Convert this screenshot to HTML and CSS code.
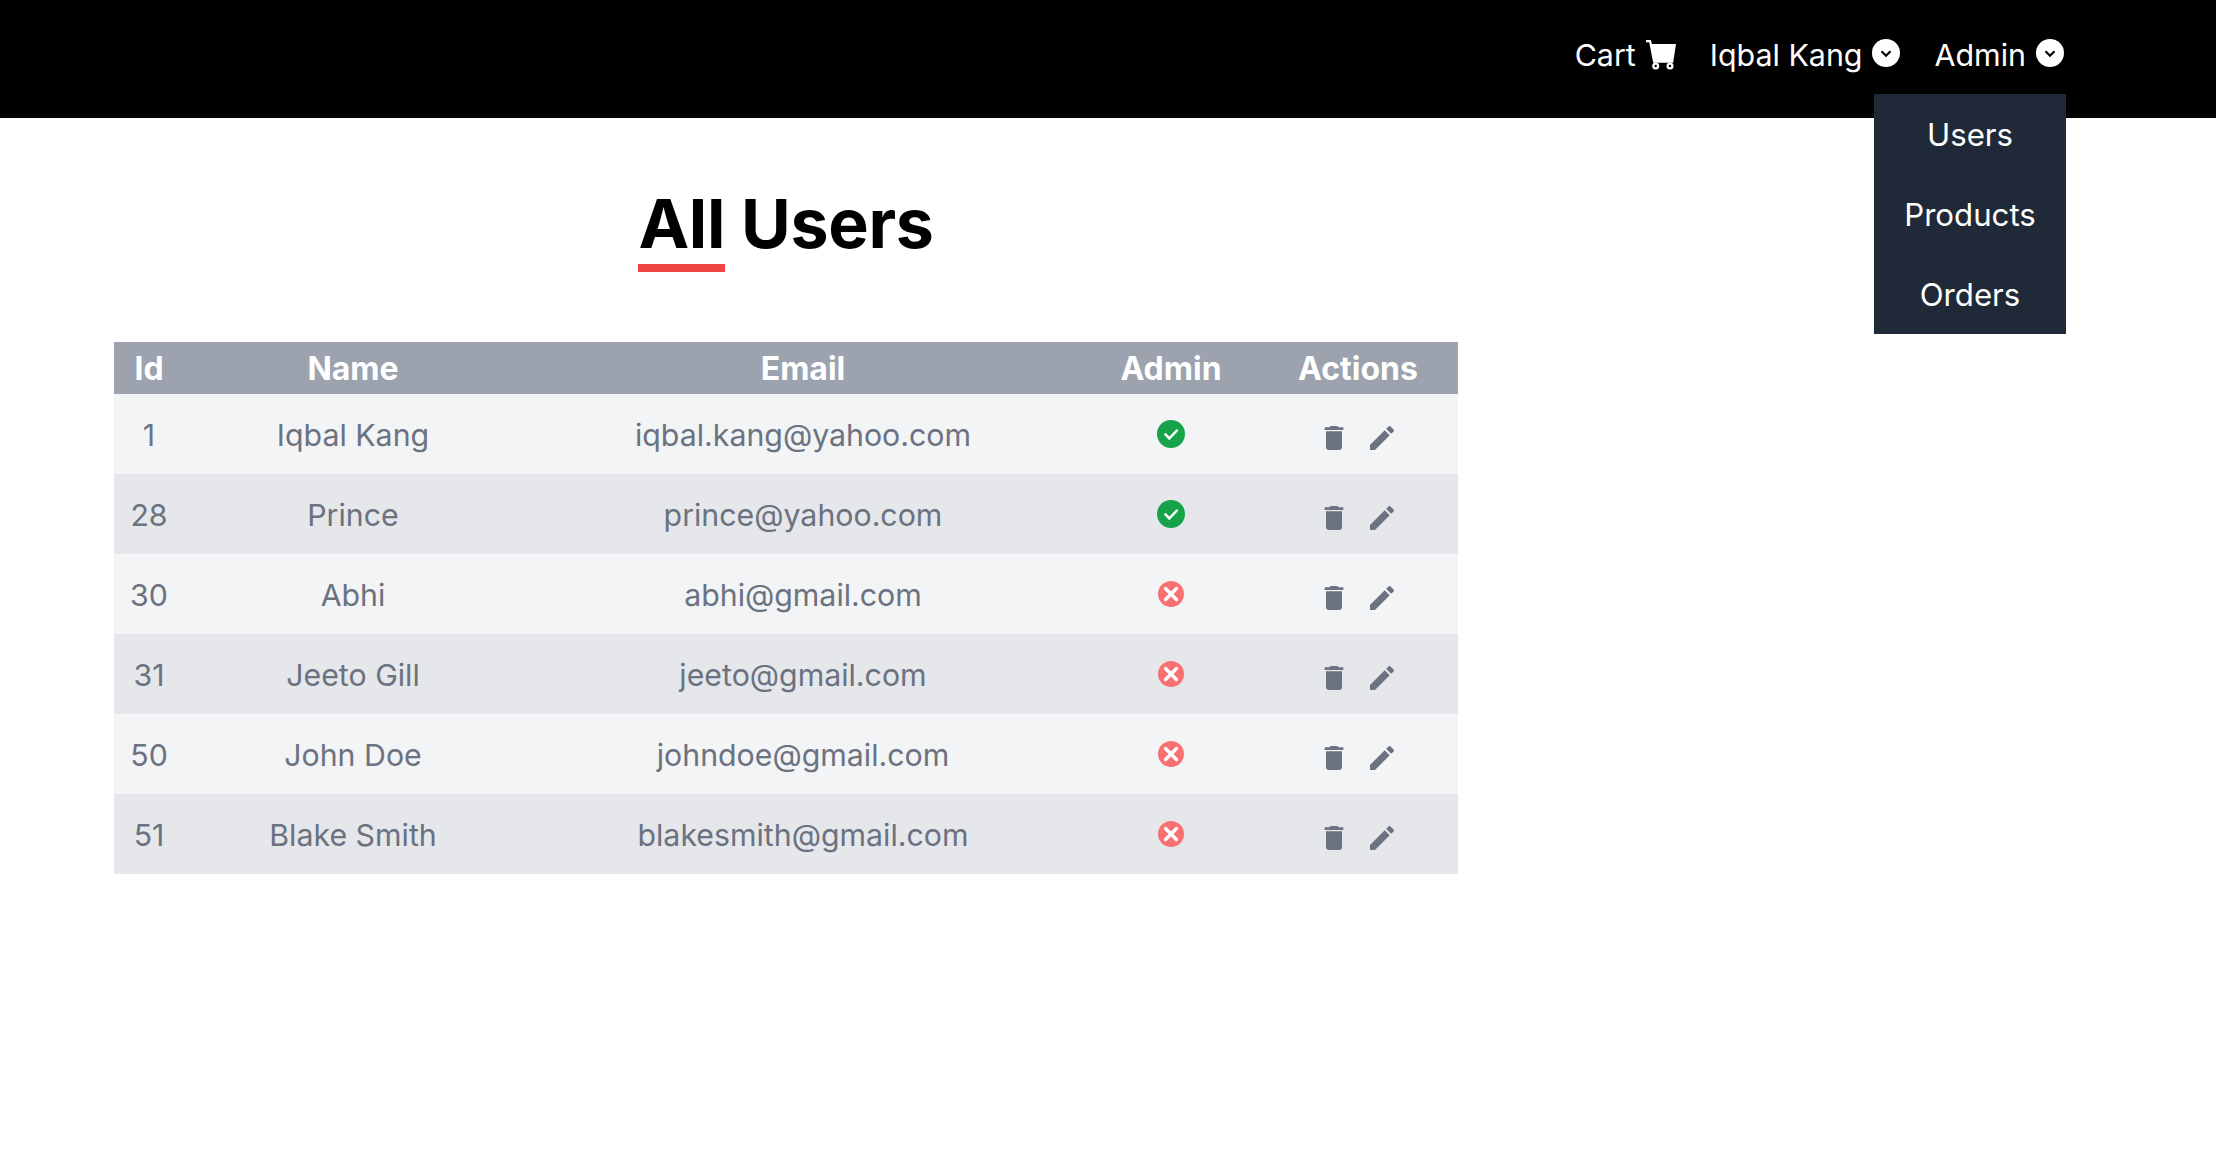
FILE: index.html
```html
<!DOCTYPE html>
<html lang="en">
<head>
<meta charset="utf-8">
<title>All Users</title>
<link rel="stylesheet" href="styles.css">
</head>
<body>
<header class="navbar">
  <a class="nav-link">Cart
    <svg class="cart-icon" viewBox="0 0 30 30"><path d="M0 0h3.6c.9 0 1.5.5 1.7 1.3L5.8 4H30l-2.6 16.8-.2 2H7.2L3.2 2.2H0z"/><path fill-rule="evenodd" d="M9.7 22.5a3.5 3.5 0 1 0 0 7 3.5 3.5 0 0 0 0-7zm0 2.3a1.2 1.2 0 1 1 0 2.4 1.2 1.2 0 0 1 0-2.4zM24 22.5a3.5 3.5 0 1 0 0 7 3.5 3.5 0 0 0 0-7zm0 2.3a1.2 1.2 0 1 1 0 2.4 1.2 1.2 0 0 1 0-2.4z"/></svg>
  </a>
  <a class="nav-link">Iqbal Kang
    <svg class="chev-icon" viewBox="0 0 28 28"><circle cx="14" cy="14" r="14"/><path class="chev" d="M9.5 12.2l4.5 4.5 4.5-4.5"/></svg>
  </a>
  <div class="nav-menu">
    <a class="nav-link">Admin
      <svg class="chev-icon" viewBox="0 0 28 28"><circle cx="14" cy="14" r="14"/><path class="chev" d="M9.5 12.2l4.5 4.5 4.5-4.5"/></svg>
    </a>
    <ul class="dropdown">
      <li>Users</li>
      <li>Products</li>
      <li>Orders</li>
    </ul>
  </div>
</header>
<main class="content">
  <h1 class="title"><span class="title-mark">All</span> Users</h1>
  <table class="users">
    <colgroup><col class="c-id"><col class="c-name"><col class="c-email"><col class="c-admin"><col class="c-actions"></colgroup>
    <thead><tr><th>Id</th><th>Name</th><th>Email</th><th>Admin</th><th>Actions</th></tr></thead>
    <tbody id="rows">
      <tr><td>1</td><td>Iqbal Kang</td><td>iqbal.kang@yahoo.com</td><td><svg class="status yes" viewBox="0 0 20 20"><circle cx="10" cy="10" r="10"/><path d="M6 10.3l2.8 2.8L14.2 7.5" class="mark"/></svg></td><td><div class="actions"><svg class="act" viewBox="0 0 24 24"><path d="M6 19c0 1.1.9 2 2 2h8c1.1 0 2-.9 2-2V7H6v12zM19 4h-3.5l-1-1h-5l-1 1H5v2h14V4z"/></svg><svg class="act" viewBox="0 0 24 24"><path d="M3 17.25V21h3.75L17.81 9.94l-3.75-3.75L3 17.25zM20.71 7.04c.39-.39.39-1.02 0-1.41l-2.34-2.34c-.39-.39-1.02-.39-1.41 0l-1.83 1.83 3.75 3.75 1.83-1.83z"/></svg></div></td></tr>
      <tr><td>28</td><td>Prince</td><td>prince@yahoo.com</td><td><svg class="status yes" viewBox="0 0 20 20"><circle cx="10" cy="10" r="10"/><path d="M6 10.3l2.8 2.8L14.2 7.5" class="mark"/></svg></td><td><div class="actions"><svg class="act" viewBox="0 0 24 24"><path d="M6 19c0 1.1.9 2 2 2h8c1.1 0 2-.9 2-2V7H6v12zM19 4h-3.5l-1-1h-5l-1 1H5v2h14V4z"/></svg><svg class="act" viewBox="0 0 24 24"><path d="M3 17.25V21h3.75L17.81 9.94l-3.75-3.75L3 17.25zM20.71 7.04c.39-.39.39-1.02 0-1.41l-2.34-2.34c-.39-.39-1.02-.39-1.41 0l-1.83 1.83 3.75 3.75 1.83-1.83z"/></svg></div></td></tr>
      <tr><td>30</td><td>Abhi</td><td>abhi@gmail.com</td><td><svg class="status no" viewBox="0 0 20 20"><circle cx="10" cy="10" r="10"/><path d="M5.8 5.8l8.4 8.4M14.2 5.8l-8.4 8.4" class="mark"/></svg></td><td><div class="actions"><svg class="act" viewBox="0 0 24 24"><path d="M6 19c0 1.1.9 2 2 2h8c1.1 0 2-.9 2-2V7H6v12zM19 4h-3.5l-1-1h-5l-1 1H5v2h14V4z"/></svg><svg class="act" viewBox="0 0 24 24"><path d="M3 17.25V21h3.75L17.81 9.94l-3.75-3.75L3 17.25zM20.71 7.04c.39-.39.39-1.02 0-1.41l-2.34-2.34c-.39-.39-1.02-.39-1.41 0l-1.83 1.83 3.75 3.75 1.83-1.83z"/></svg></div></td></tr>
      <tr><td>31</td><td>Jeeto Gill</td><td>jeeto@gmail.com</td><td><svg class="status no" viewBox="0 0 20 20"><circle cx="10" cy="10" r="10"/><path d="M5.8 5.8l8.4 8.4M14.2 5.8l-8.4 8.4" class="mark"/></svg></td><td><div class="actions"><svg class="act" viewBox="0 0 24 24"><path d="M6 19c0 1.1.9 2 2 2h8c1.1 0 2-.9 2-2V7H6v12zM19 4h-3.5l-1-1h-5l-1 1H5v2h14V4z"/></svg><svg class="act" viewBox="0 0 24 24"><path d="M3 17.25V21h3.75L17.81 9.94l-3.75-3.75L3 17.25zM20.71 7.04c.39-.39.39-1.02 0-1.41l-2.34-2.34c-.39-.39-1.02-.39-1.41 0l-1.83 1.83 3.75 3.75 1.83-1.83z"/></svg></div></td></tr>
      <tr><td>50</td><td>John Doe</td><td>johndoe@gmail.com</td><td><svg class="status no" viewBox="0 0 20 20"><circle cx="10" cy="10" r="10"/><path d="M5.8 5.8l8.4 8.4M14.2 5.8l-8.4 8.4" class="mark"/></svg></td><td><div class="actions"><svg class="act" viewBox="0 0 24 24"><path d="M6 19c0 1.1.9 2 2 2h8c1.1 0 2-.9 2-2V7H6v12zM19 4h-3.5l-1-1h-5l-1 1H5v2h14V4z"/></svg><svg class="act" viewBox="0 0 24 24"><path d="M3 17.25V21h3.75L17.81 9.94l-3.75-3.75L3 17.25zM20.71 7.04c.39-.39.39-1.02 0-1.41l-2.34-2.34c-.39-.39-1.02-.39-1.41 0l-1.83 1.83 3.75 3.75 1.83-1.83z"/></svg></div></td></tr>
      <tr><td>51</td><td>Blake Smith</td><td>blakesmith@gmail.com</td><td><svg class="status no" viewBox="0 0 20 20"><circle cx="10" cy="10" r="10"/><path d="M5.8 5.8l8.4 8.4M14.2 5.8l-8.4 8.4" class="mark"/></svg></td><td><div class="actions"><svg class="act" viewBox="0 0 24 24"><path d="M6 19c0 1.1.9 2 2 2h8c1.1 0 2-.9 2-2V7H6v12zM19 4h-3.5l-1-1h-5l-1 1H5v2h14V4z"/></svg><svg class="act" viewBox="0 0 24 24"><path d="M3 17.25V21h3.75L17.81 9.94l-3.75-3.75L3 17.25zM20.71 7.04c.39-.39.39-1.02 0-1.41l-2.34-2.34c-.39-.39-1.02-.39-1.41 0l-1.83 1.83 3.75 3.75 1.83-1.83z"/></svg></div></td></tr>
    </tbody>
  </table>
</main>
</body>
</html>
```
FILE: styles.css
```css
* { box-sizing: border-box; }
html, body { margin: 0; padding: 0; }
body { font-family: Inter, "Liberation Sans", sans-serif; background: #fff; color: #000; height: 1152px; overflow: hidden; }

.navbar { height: 118px; background: #000; color: #fff; display: flex; justify-content: flex-end; align-items: flex-start; gap: 34px; padding: 35px 152px 0 0; font-size: 30.4px; line-height: 40px; }
.nav-link { display: flex; align-items: center; gap: 10px; }
.nav-menu { position: relative; }
.cart-icon { width: 30px; height: 30px; fill: currentColor; }
.chev-icon { width: 28px; height: 28px; margin-top: -4px; fill: currentColor; }
.chev { fill: none; stroke: #000; stroke-width: 2.2; }

.dropdown { position: absolute; top: 59px; right: -2px; width: 192px; margin: 0; padding: 0; list-style: none; background: #1f2937; text-align: center; font-size: 31.2px; z-index: 2; }
.dropdown li { height: 80px; line-height: 82px; }

.content { width: 1344px; margin-left: 114px; }
.title { margin: 59px 0 0; height: 92px; font-size: 68px; line-height: 92px; font-weight: 700; text-align: center; letter-spacing: -0.3px; }
.title-mark { display: inline-block; height: 95px; border-bottom: 8px solid #ef4444; }

.users { width: 1344px; margin-top: 73px; border-collapse: collapse; table-layout: fixed; font-size: 30.3px; }
.c-id { width: 70px; } .c-name { width: 338px; } .c-email { width: 562px; } .c-admin { width: 174px; } .c-actions { width: 200px; }
.users th { height: 52px; padding: 2px 0 0; background: #9ca3af; color: #fff; font-size: 32px; font-weight: 700; line-height: 50px; }
.users td { height: 80px; padding: 2px 0 0; text-align: center; color: #6b7280; }
.users tbody tr:nth-child(odd) { background: #f3f4f6; }
.users tbody tr:nth-child(even) { background: #e5e7eb; }

.status { display: block; margin: -2px auto 0; }
.status .mark { fill: none; stroke: #fff; stroke-linecap: round; }
.status.yes { width: 28px; height: 28px; }
.status.yes circle { fill: #16a34a; }
.status.yes .mark { stroke-width: 1.8; }
.status.no { width: 26px; height: 26px; }
.status.no circle { fill: #f87171; }
.status.no .mark { stroke-width: 2.6; }

.actions { display: flex; justify-content: center; gap: 16px; padding-top: 6px; }
.act { width: 32px; height: 32px; fill: #6b7280; }
```
